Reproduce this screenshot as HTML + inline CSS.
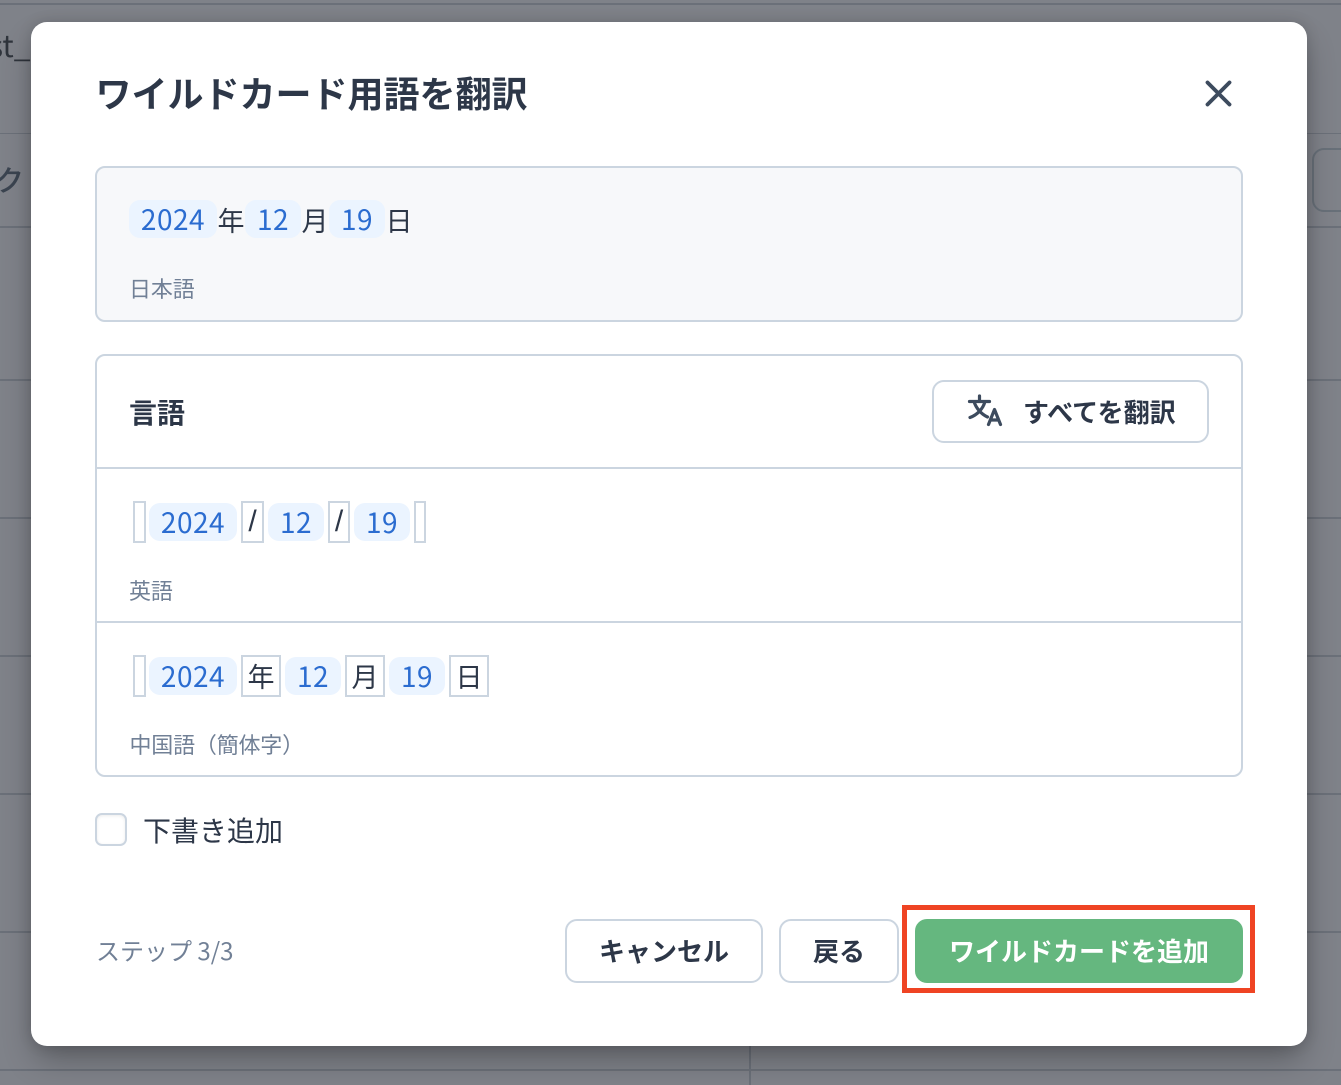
<!DOCTYPE html>
<html lang="ja"><head><meta charset="utf-8"><title>ワイルドカード用語を翻訳</title>
<style>
*{box-sizing:border-box;margin:0;padding:0}
html,body{width:1341px;height:1085px;overflow:hidden}
body{position:relative;background:#7f8289;font-family:"Liberation Sans","Noto Sans CJK JP",sans-serif;color:#2d3748}
.a{position:absolute;white-space:nowrap}
.j{font-family:"Noto Sans CJK JP",sans-serif}
.hl{position:absolute;height:1.5px;left:0;width:1341px;background:#6b7079}
.modal{position:absolute;left:31px;top:22px;width:1276px;height:1024px;background:#fff;border-radius:16px;box-shadow:0 16px 32px -4px rgba(0,0,0,.3),0 0 14px rgba(0,0,0,.14)}
.panel{position:absolute;border:2px solid #cbd5e0;border-radius:10px}
.chip{position:absolute;height:38px;border-radius:11px;background:#ebf4ff;color:#2b6cd0;font:28px/38px "Noto Sans CJK JP",sans-serif;letter-spacing:.5px;text-align:center}
.t{position:absolute;font:27px/38px "Noto Sans CJK JP",sans-serif;color:#2d3748;text-align:center}
.b{position:absolute;height:42px;border:2px solid #cbd5e0;font:27px/37px "Noto Sans CJK JP",sans-serif;color:#2d3748;text-align:center}
.s{font:30px/38px "Liberation Sans",sans-serif}
.lab{position:absolute;font:22px/30px "Noto Sans CJK JP",sans-serif;letter-spacing:-.1px;color:#718096;white-space:nowrap}
.btn{position:absolute;height:64px;border:2px solid #cbd5e0;border-radius:12px;background:#fff;font:700 26px/60px "Noto Sans CJK JP",sans-serif;color:#2d3748;text-align:center;white-space:nowrap}
</style></head><body>
<div class="hl" style="top:3px"></div>
<div class="hl" style="top:132.5px"></div>
<div class="hl" style="top:226px"></div>
<div class="hl" style="top:379px"></div>
<div class="hl" style="top:517px"></div>
<div class="hl" style="top:655px"></div>
<div class="hl" style="top:793px"></div>
<div class="hl" style="top:931px"></div>
<div class="hl" style="top:1069px"></div>
<div class="a" style="left:749px;top:1040px;width:1.5px;height:45px;background:#6b7079"></div>
<div class="a" style="left:1312px;top:148px;width:60px;height:64px;border:2px solid #687079;border-radius:12px"></div>
<div class="a" style="left:-11px;top:26px;font:30px/36px 'Noto Sans CJK JP',sans-serif;color:#2f343c">st_w</div>
<div class="a j" style="left:-5px;top:160px;font:500 29px/38px 'Noto Sans CJK JP',sans-serif;color:#3b4450">ク</div>

<div class="modal"></div>
<div class="a j" style="left:95.5px;top:66px;font:700 36px/52px 'Noto Sans CJK JP',sans-serif;color:#2d3748">ワイルドカード用語を翻訳</div>
<svg class="a" style="left:1204px;top:79px" width="30" height="30" viewBox="0 0 30 30"><path d="M3.5 3.5L25.5 25.5M25.5 3.5L3.5 25.5" stroke="#3d4b5e" stroke-width="3.8" stroke-linecap="round" fill="none"/></svg>

<div class="panel" style="left:95px;top:166px;width:1148px;height:156px;background:#f7f8fa"></div>
<div class="chip" style="left:129px;top:200px;width:88px">2024</div>
<div class="t" style="left:217px;top:201px;width:28px">年</div>
<div class="chip" style="left:245px;top:200px;width:56px">12</div>
<div class="t" style="left:301px;top:201px;width:28px">月</div>
<div class="chip" style="left:329px;top:200px;width:56px">19</div>
<div class="t" style="left:385px;top:201px;width:28px">日</div>
<div class="lab" style="left:129px;top:273px">日本語</div>

<div class="panel" style="left:95px;top:354px;width:1148px;height:423px"></div>
<div class="a j" style="left:129px;top:392px;font:700 28px/40px 'Noto Sans CJK JP',sans-serif;color:#2d3748">言語</div>
<div class="btn" style="left:932px;top:380px;width:277px;height:63px"></div>
<svg class="a" style="left:967px;top:394px" width="37" height="35" viewBox="0 0 37 35" fill="none" stroke="#3d4b5e" stroke-width="3.2" stroke-linecap="round" stroke-linejoin="round"><path d="M2.5 7.5H22.5M12.5 2V7.5M18 7.5C16 15 10 21 3 23.5M7 7.5C9 14 14 20 20.5 23"/><path d="M21.5 30.5L27.5 15.5L33.5 30.5M23.5 26H31.5"/></svg>
<div class="a j" style="left:1023px;top:393px;font:700 26px/38px 'Noto Sans CJK JP',sans-serif;color:#2d3748">すべてを翻訳</div>
<div class="a" style="left:97px;top:467px;width:1144px;height:2px;background:#cbd5e0"></div>

<div class="b" style="left:133px;top:501px;width:13px"></div>
<div class="chip" style="left:149px;top:503px;width:88px">2024</div>
<div class="b s" style="left:241px;top:501px;width:23px">/</div>
<div class="chip" style="left:268px;top:503px;width:56px">12</div>
<div class="b s" style="left:328px;top:501px;width:22px">/</div>
<div class="chip" style="left:354px;top:503px;width:56px">19</div>
<div class="b" style="left:414px;top:501px;width:12px"></div>
<div class="lab" style="left:129px;top:575px">英語</div>
<div class="a" style="left:97px;top:621px;width:1144px;height:2px;background:#cbd5e0"></div>

<div class="b" style="left:133px;top:655px;width:13px"></div>
<div class="chip" style="left:149px;top:657px;width:88px">2024</div>
<div class="b" style="left:241px;top:655px;width:40px">年</div>
<div class="chip" style="left:285px;top:657px;width:56px">12</div>
<div class="b" style="left:345px;top:655px;width:40px">月</div>
<div class="chip" style="left:389px;top:657px;width:56px">19</div>
<div class="b" style="left:449px;top:655px;width:40px">日</div>
<div class="lab" style="left:129.5px;top:729px;letter-spacing:-.2px">中国語（簡体字）</div>

<div class="a" style="left:95px;top:813px;width:32px;height:33px;border:2px solid #cbd5e0;border-radius:7px;background:#fff;box-shadow:inset 0 1px 3px rgba(0,0,0,.08)"></div>
<div class="a j" style="left:143px;top:809px;font:28px/42px 'Noto Sans CJK JP',sans-serif;color:#2d3748">下書き追加</div>

<div class="a j" style="left:96px;top:934px;font:24px/32px 'Noto Sans CJK JP',sans-serif;color:#718096">ステップ 3/3</div>
<div class="btn" style="left:565px;top:919px;width:198px">キャンセル</div>
<div class="btn" style="left:779px;top:919px;width:120px">戻る</div>
<div class="a" style="left:902px;top:905px;width:353px;height:88px;border:5px solid #ef4423"></div>
<div class="btn" style="left:915px;top:919px;width:328px;background:#65b77f;border-color:#65b77f;color:#fff">ワイルドカードを追加</div>
</body></html>
